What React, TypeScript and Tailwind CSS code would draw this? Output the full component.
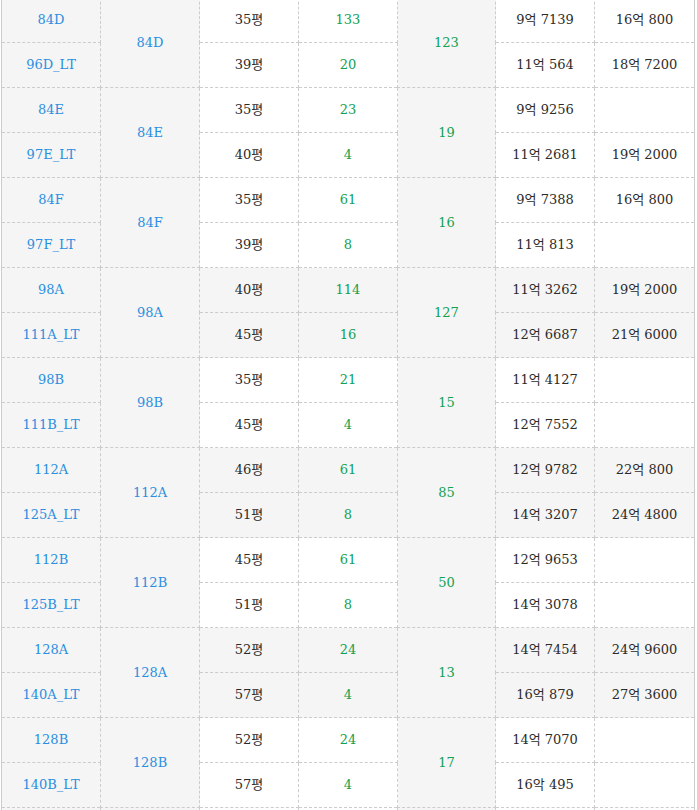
import React from "react";

type Row = { t: string; p: string; n: string; a: string; b: string };
type Group = { name: string; total: string; gray: boolean; rows: Row[] };

const groups: Group[] = [
  { name: "84D", total: "123", gray: false, rows: [
    { t: "84D", p: "35평", n: "133", a: "9억 7139", b: "16억 800" },
    { t: "96D_LT", p: "39평", n: "20", a: "11억 564", b: "18억 7200" },
  ] },
  { name: "84E", total: "19", gray: false, rows: [
    { t: "84E", p: "35평", n: "23", a: "9억 9256", b: "" },
    { t: "97E_LT", p: "40평", n: "4", a: "11억 2681", b: "19억 2000" },
  ] },
  { name: "84F", total: "16", gray: false, rows: [
    { t: "84F", p: "35평", n: "61", a: "9억 7388", b: "16억 800" },
    { t: "97F_LT", p: "39평", n: "8", a: "11억 813", b: "" },
  ] },
  { name: "98A", total: "127", gray: true, rows: [
    { t: "98A", p: "40평", n: "114", a: "11억 3262", b: "19억 2000" },
    { t: "111A_LT", p: "45평", n: "16", a: "12억 6687", b: "21억 6000" },
  ] },
  { name: "98B", total: "15", gray: false, rows: [
    { t: "98B", p: "35평", n: "21", a: "11억 4127", b: "" },
    { t: "111B_LT", p: "45평", n: "4", a: "12억 7552", b: "" },
  ] },
  { name: "112A", total: "85", gray: true, rows: [
    { t: "112A", p: "46평", n: "61", a: "12억 9782", b: "22억 800" },
    { t: "125A_LT", p: "51평", n: "8", a: "14억 3207", b: "24억 4800" },
  ] },
  { name: "112B", total: "50", gray: false, rows: [
    { t: "112B", p: "45평", n: "61", a: "12억 9653", b: "" },
    { t: "125B_LT", p: "51평", n: "8", a: "14억 3078", b: "" },
  ] },
  { name: "128A", total: "13", gray: true, rows: [
    { t: "128A", p: "52평", n: "24", a: "14억 7454", b: "24억 9600" },
    { t: "140A_LT", p: "57평", n: "4", a: "16억 879", b: "27억 3600" },
  ] },
  { name: "128B", total: "17", gray: false, rows: [
    { t: "128B", p: "52평", n: "24", a: "14억 7070", b: "" },
    { t: "140B_LT", p: "57평", n: "4", a: "16악 495", b: "" },
  ] },
  { name: "", total: "", gray: false, rows: [
    { t: "", p: "", n: "", a: "", b: "" },
  ] },
];

const cell = "border border-dashed border-[#cccccc] text-center align-middle p-0 h-[45px]";

export default function App() {
  return (
    <div className="w-[697px] h-[810px] overflow-hidden bg-white">
      <table
        className="ml-px mt-[-3px] w-[693px] table-fixed border-collapse border-x border-solid border-[#cccccc] text-[13px] text-[#2b2b2b]"
        style={{ fontFamily: '"DejaVu Serif", "Noto Sans CJK KR", serif' }}
      >
        <colgroup>
          <col className="w-[99px]" />
          <col className="w-[99px]" />
          <col className="w-[99px]" />
          <col className="w-[99px]" />
          <col className="w-[98px]" />
          <col className="w-[99px]" />
          <col className="w-[100px]" />
        </colgroup>
        <tbody>
          {groups.map((g, gi) =>
            g.rows.map((r, i) => {
              const bg = g.gray ? "bg-[#f5f5f5]" : "bg-white";
              return (
                <tr key={gi + "-" + i} className="h-[45px]">
                  <td className={`${cell} bg-[#f5f5f5] text-[#2a8fe0]`}>{r.t}</td>
                  {i === 0 && (
                    <td rowSpan={g.rows.length} className={`${cell} bg-[#f5f5f5] text-[#2a8fe0]`}>
                      {g.name}
                    </td>
                  )}
                  <td className={`${cell} ${bg}`}>{r.p}</td>
                  <td className={`${cell} ${bg} text-[#12a150]`}>{r.n}</td>
                  {i === 0 && (
                    <td rowSpan={g.rows.length} className={`${cell} bg-[#f5f5f5] text-[#12a150]`}>
                      {g.total}
                    </td>
                  )}
                  <td className={`${cell} ${bg}`}>{r.a}</td>
                  <td className={`${cell} ${bg}`}>{r.b}</td>
                </tr>
              );
            })
          )}
        </tbody>
      </table>
    </div>
  );
}
